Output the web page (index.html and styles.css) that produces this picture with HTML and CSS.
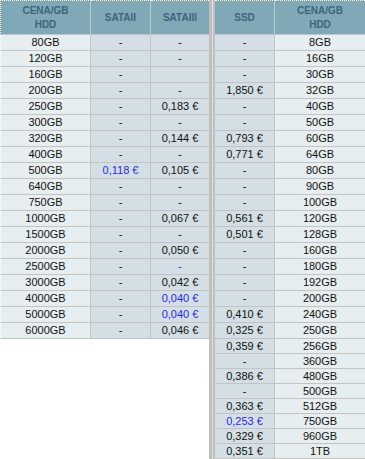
FILE: index.html
```html
<!DOCTYPE html>
<html lang="cs">
<head>
<meta charset="utf-8">
<title>Cena za GB</title>
<link rel="stylesheet" href="styles.css">
</head>
<body>
<div class="board">
  <div class="side side-hdd">
    <table class="grid grid-hdd">
      <thead>
        <tr><th class="c-size">CENA/GB<br>HDD</th><th class="c-val">SATAII</th><th class="c-val c-last">SATAIII</th></tr>
      </thead>
      <tbody>
        <tr><td class="c-size">80GB</td><td class="c-val">-</td><td class="c-val c-last">-</td></tr>
        <tr><td class="c-size">120GB</td><td class="c-val">-</td><td class="c-val c-last">-</td></tr>
        <tr><td class="c-size">160GB</td><td class="c-val">-</td><td class="c-val c-last"></td></tr>
        <tr><td class="c-size">200GB</td><td class="c-val">-</td><td class="c-val c-last">-</td></tr>
        <tr><td class="c-size">250GB</td><td class="c-val">-</td><td class="c-val c-last">0,183 €</td></tr>
        <tr><td class="c-size">300GB</td><td class="c-val">-</td><td class="c-val c-last">-</td></tr>
        <tr><td class="c-size">320GB</td><td class="c-val">-</td><td class="c-val c-last">0,144 €</td></tr>
        <tr><td class="c-size">400GB</td><td class="c-val">-</td><td class="c-val c-last">-</td></tr>
        <tr><td class="c-size">500GB</td><td class="c-val hl">0,118 €</td><td class="c-val c-last">0,105 €</td></tr>
        <tr><td class="c-size">640GB</td><td class="c-val">-</td><td class="c-val c-last">-</td></tr>
        <tr><td class="c-size">750GB</td><td class="c-val">-</td><td class="c-val c-last">-</td></tr>
        <tr><td class="c-size">1000GB</td><td class="c-val">-</td><td class="c-val c-last">0,067 €</td></tr>
        <tr><td class="c-size">1500GB</td><td class="c-val">-</td><td class="c-val c-last">-</td></tr>
        <tr><td class="c-size">2000GB</td><td class="c-val">-</td><td class="c-val c-last">0,050 €</td></tr>
        <tr><td class="c-size">2500GB</td><td class="c-val">-</td><td class="c-val c-last hl">-</td></tr>
        <tr><td class="c-size">3000GB</td><td class="c-val">-</td><td class="c-val c-last">0,042 €</td></tr>
        <tr><td class="c-size">4000GB</td><td class="c-val">-</td><td class="c-val c-last hl">0,040 €</td></tr>
        <tr><td class="c-size">5000GB</td><td class="c-val">-</td><td class="c-val c-last hl">0,040 €</td></tr>
        <tr class="end"><td class="c-size">6000GB</td><td class="c-val">-</td><td class="c-val c-last">0,046 €</td></tr>
      </tbody>
    </table>
  </div>
  <div class="side side-ssd">
    <table class="grid grid-ssd">
      <thead>
        <tr><th class="c-val">SSD</th><th class="c-size c-last">CENA/GB<br>HDD</th></tr>
      </thead>
      <tbody>
        <tr><td class="c-val">-</td><td class="c-size c-last">8GB</td></tr>
        <tr><td class="c-val">-</td><td class="c-size c-last">16GB</td></tr>
        <tr><td class="c-val">-</td><td class="c-size c-last">30GB</td></tr>
        <tr><td class="c-val">1,850 €</td><td class="c-size c-last">32GB</td></tr>
        <tr><td class="c-val">-</td><td class="c-size c-last">40GB</td></tr>
        <tr><td class="c-val">-</td><td class="c-size c-last">50GB</td></tr>
        <tr><td class="c-val">0,793 €</td><td class="c-size c-last">60GB</td></tr>
        <tr><td class="c-val">0,771 €</td><td class="c-size c-last">64GB</td></tr>
        <tr><td class="c-val">-</td><td class="c-size c-last">80GB</td></tr>
        <tr><td class="c-val">-</td><td class="c-size c-last">90GB</td></tr>
        <tr><td class="c-val">-</td><td class="c-size c-last">100GB</td></tr>
        <tr><td class="c-val">0,561 €</td><td class="c-size c-last">120GB</td></tr>
        <tr><td class="c-val">0,501 €</td><td class="c-size c-last">128GB</td></tr>
        <tr><td class="c-val">-</td><td class="c-size c-last">160GB</td></tr>
        <tr><td class="c-val">-</td><td class="c-size c-last">180GB</td></tr>
        <tr><td class="c-val">-</td><td class="c-size c-last">192GB</td></tr>
        <tr><td class="c-val">-</td><td class="c-size c-last">200GB</td></tr>
        <tr><td class="c-val">0,410 €</td><td class="c-size c-last">240GB</td></tr>
        <tr><td class="c-val">0,325 €</td><td class="c-size c-last">250GB</td></tr>
        <tr class="tail"><td class="c-val">0,359 €</td><td class="c-size c-last">256GB</td></tr>
        <tr class="tail"><td class="c-val">-</td><td class="c-size c-last">360GB</td></tr>
        <tr class="tail"><td class="c-val">0,386 €</td><td class="c-size c-last">480GB</td></tr>
        <tr class="tail"><td class="c-val">-</td><td class="c-size c-last">500GB</td></tr>
        <tr class="tail"><td class="c-val">0,363 €</td><td class="c-size c-last">512GB</td></tr>
        <tr class="tail"><td class="c-val hl">0,253 €</td><td class="c-size c-last">750GB</td></tr>
        <tr class="tail"><td class="c-val">0,329 €</td><td class="c-size c-last">960GB</td></tr>
        <tr class="tail"><td class="c-val">0,351 €</td><td class="c-size c-last">1TB</td></tr>
      </tbody>
    </table>
  </div>
</div>
</body>
</html>
```
FILE: styles.css
```css
html, body {
  margin: 0;
  padding: 0;
  background: #ffffff;
}

body {
  font-family: "Liberation Sans", Arial, sans-serif;
  color: #111111;
}

.board {
  display: flex;
  align-items: stretch;
  gap: 1px;
  width: 365px;
  background: #dedede;
}

.side {
  background: #ffffff;
}

.side-hdd {
  width: 209px;
  border-right: 3px solid #bfbfbf;
}

.side-ssd {
  width: 150px;
  border-left: 2px solid #bfbfbf;
}

.grid {
  border-collapse: separate;
  border-spacing: 0;
  table-layout: fixed;
  font-size: 11px;
}

.grid-hdd {
  width: 209px;
}

.grid-ssd {
  width: 150px;
}

.grid th,
.grid td {
  box-sizing: border-box;
  padding: 0;
  text-align: center;
  vertical-align: middle;
  white-space: nowrap;
  border-right: 1px solid #c4c4c4;
  border-bottom: 1px solid #c4c4c4;
}

.grid th {
  background: #80a9b8;
  color: #3d6578;
  font-size: 10px;
  font-weight: bold;
  line-height: 14px;
  padding: 3px 0 2px;
  border-top: 1px dotted #ffffff;
  border-right-color: #bccbd1;
}

.grid td {
  line-height: 15px;
  background: #d3dfe4;
}

.grid td.c-size {
  background: #e7eef0;
}

.grid .c-last {
  border-right: none;
}

.grid-hdd .c-size {
  width: 91px;
  border-left: 1px dotted #ffffff;
}

.grid-hdd .c-val {
  width: 60px;
}

.grid-hdd .c-val.c-last {
  width: 58px;
}

.grid-ssd .c-val {
  width: 60px;
}

.grid-ssd .c-size {
  width: 90px;
}

.grid tr.tail td {
  line-height: 14px;
}

.grid .hl {
  color: #2a2af0;
}
```
